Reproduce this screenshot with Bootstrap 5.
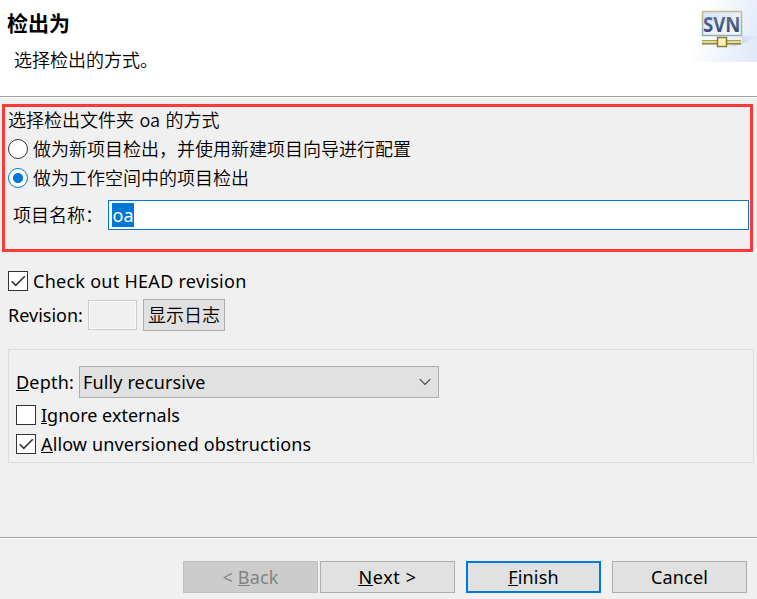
<!DOCTYPE html>
<html lang="zh-CN">
<head>
<meta charset="utf-8">
<meta name="viewport" content="width=device-width, initial-scale=1">
<title>检出为</title>
<link href="https://cdn.jsdelivr.net/npm/bootstrap@5.3.0/dist/css/bootstrap.min.css" rel="stylesheet">
<style>
body{background:#f0f0f0;color:#000;font:18px/24px "Noto Sans","Noto Sans CJK SC",sans-serif;height:599px;overflow:hidden}
.cjk{font-family:"Noto Sans CJK SC",sans-serif;font-weight:350}
.dlg-head{height:98px;background:#fff;border-bottom:1px solid #fff;box-shadow:inset 0 -1px #a0a0a0}
.dlg-head h1{font-size:21px;line-height:30px;font-weight:700;margin:7px 0 0 7px}
.dlg-head p{margin:10px 0 0 14px}
.marked{margin:6px 4px 0 2px;border:3px solid #ff3838;height:148px;padding:0 1px 0 3px}
.lead-line{height:27px;word-spacing:1.4px}
.choice{height:29px;gap:5px}
.choice.cjk span{padding-bottom:2px}
.name-label{margin-left:5px;padding-bottom:2px}
.form-check-input[type]{width:20px;height:20px;margin:0;border:1px solid #333;background-color:#fff;background-size:100%;box-shadow:none;flex:none}
.form-check-input[type=checkbox]{border-radius:0}
.form-check-input[type=checkbox]:checked{background-image:url("data:image/svg+xml,%3Csvg xmlns='http://www.w3.org/2000/svg' viewBox='0 0 18 18'%3E%3Cpath d='M2.7 9.2 6.8 13.3 15.8 4.3' fill='none' stroke='%23333' stroke-width='1.6'/%3E%3C/svg%3E")}
.form-check-input[type=radio]:checked{border-color:#0078d7;background-image:radial-gradient(circle,#0078d7 0 4.6px,transparent 5.4px)}
.name-box{height:30px;width:641px;border:1px solid #0078d7;background:#fff;padding:2px 3px}
.name-box span{background:#0078d7;color:#fff;height:24px;line-height:25px;width:22px;font-family:"Noto Sans",sans-serif;font-weight:400;text-align:center}
.revision{padding-top:14px}
.rev-box{width:49px;height:30px;border:1px solid #ccc;box-shadow:inset 0 0 0 1px #f9f9f9;margin:0 6px 0 5px}
.btn.win{border:1px solid #adadad;border-radius:0;background:#e1e1e1;color:#000;font-size:18px;line-height:30px;height:32px;width:135px;padding:0;letter-spacing:.2px}
.btn.win:disabled{background:#ccc;border-color:#bfbfbf;color:#838383;opacity:1}
.btn.win.primary{border:2px solid #0078d7;line-height:28px;margin:0 11px}
.btn.win.log{width:82px;letter-spacing:0;line-height:28px;padding-bottom:2px}
.btn.win.next{letter-spacing:.6px}
.options{margin:18px 3px 0 8px;height:114px;border:1px solid #dcdcdc;padding:16px 7px 0}
.options .choice:nth-of-type(1){margin-top:2px}
.depth-label{width:58px;margin-right:5px;letter-spacing:.2px}
.depth{width:360px;height:32px;border:1px solid #adadad;background:#e1e1e1;padding:0 7px 0 3px}
.dlg-foot{margin-top:74px;border-top:1px solid #a0a0a0;box-shadow:inset 0 1px #fff;padding:23px 10px 0 183px}
u{text-decoration:none;box-shadow:inset 0 -1px currentColor;display:inline-block;line-height:18px}
.lat{display:inline-block;white-space:nowrap}
.wide{letter-spacing:.27px}
.semi{letter-spacing:.13px}
</style>
<script src="https://cdn.jsdelivr.net/npm/bootstrap@5.3.0/dist/js/bootstrap.bundle.min.js"></script>
</head>
<body>
<header class="dlg-head d-flex justify-content-between">
  <div class="cjk"><h1>检出为</h1><p>选择检出的方式。</p></div>
  <svg width="80" height="62" viewBox="0 0 80 62">
    <defs>
      <linearGradient id="bg" x1="0" y1=".3" x2="1" y2=".6"><stop offset=".15" stop-color="#fff"/><stop offset="1" stop-color="#e2eafa"/></linearGradient>
      <linearGradient id="tx" x1="0" y1="0" x2="0" y2="1"><stop offset=".3" stop-color="#5b6a90"/><stop offset="1" stop-color="#2c3f70"/></linearGradient>
      <linearGradient id="sc" x1="0" y1="0" x2="1" y2="1"><stop stop-color="#d5e4f6"/><stop offset="1" stop-color="#f7faff"/></linearGradient>
      <linearGradient id="fr" x1="0" y1="0" x2="0" y2="1"><stop stop-color="#cbb98a"/><stop offset="1" stop-color="#8fb1ae"/></linearGradient>
      <linearGradient id="sh" x1="0" y1="0" x2="1" y2="0"><stop stop-color="#aeb5d0" stop-opacity=".6"/><stop offset="1" stop-color="#c6cfe8" stop-opacity=".2"/></linearGradient>
    </defs>
    <path d="M12 0H80V62H12z" fill="url(#bg)"/>
    <path d="M50 47Q70 45 80 36H65V42z" fill="url(#sh)"/>
    <rect x="25.5" y="11.5" width="39" height="24" fill="url(#sc)" stroke="url(#fr)" stroke-width="1.5"/>
    <text x="26" y="31.5" textLength="37.5" lengthAdjust="spacingAndGlyphs" font-family="Open Sans" font-size="20.5" font-weight="700" fill="url(#tx)">SVN</text>
    <path d="M25 42H64" stroke="#aaa04c" stroke-width="4"/><path d="M25 42H64" stroke="#f2edb3" stroke-width="1.4"/><path d="M25 44H64" stroke="#77702e"/>
    <rect x="40.5" y="37.5" width="9" height="9" fill="#fff1b9" stroke="#8c7a30" stroke-width="1.5"/>
  </svg>
</header>
<main>
  <section class="marked">
    <div class="cjk lead-line">选择检出文件夹 <span class="lat">oa</span> 的方式</div>
    <label class="choice d-flex align-items-center cjk"><input class="form-check-input" type="radio" name="mode"><span>做为新项目检出，并使用新建项目向导进行配置</span></label>
    <label class="choice d-flex align-items-center cjk"><input class="form-check-input" type="radio" name="mode" checked><span>做为工作空间中的项目检出</span></label>
    <div class="d-flex align-items-center justify-content-between pt-2"><span class="cjk name-label">项目名称：</span><div class="name-box d-flex align-items-center"><span>oa</span></div></div>
  </section>
  <div class="ps-2 revision">
    <label class="choice d-flex align-items-center"><input class="form-check-input" type="checkbox" checked><span class="lat wide">Check out HEAD revision</span></label>
    <div class="d-flex align-items-center mt-1"><span class="lat">Revision:</span><div class="rev-box"></div><button class="btn win log cjk">显示日志</button></div>
  </div>
  <section class="options">
    <div class="d-flex align-items-center"><span class="lat depth-label"><u>D</u>epth:</span><div class="depth d-flex align-items-center justify-content-between"><span class="lat semi">Fully recursive</span><svg width="12" height="8" viewBox="0 0 12 8"><path d="m.8 1.2 5.2 5.2 5.2-5.2" fill="none" stroke="#444" stroke-width="1.2"/></svg></div></div>
    <label class="choice d-flex align-items-center"><input class="form-check-input" type="checkbox"><span class="lat"><u>I</u>gnore externals</span></label>
    <label class="choice d-flex align-items-center"><input class="form-check-input" type="checkbox" checked><span class="lat semi"><u>A</u>llow unversioned obstructions</span></label>
  </section>
</main>
<footer class="dlg-foot d-flex">
  <button class="btn win me-auto" disabled>&lt; <u>B</u>ack</button>
  <button class="btn win next"><u>N</u>ext &gt;</button>
  <button class="btn win primary"><u>F</u>inish</button>
  <button class="btn win">Cancel</button>
</footer>
</body>
</html>
